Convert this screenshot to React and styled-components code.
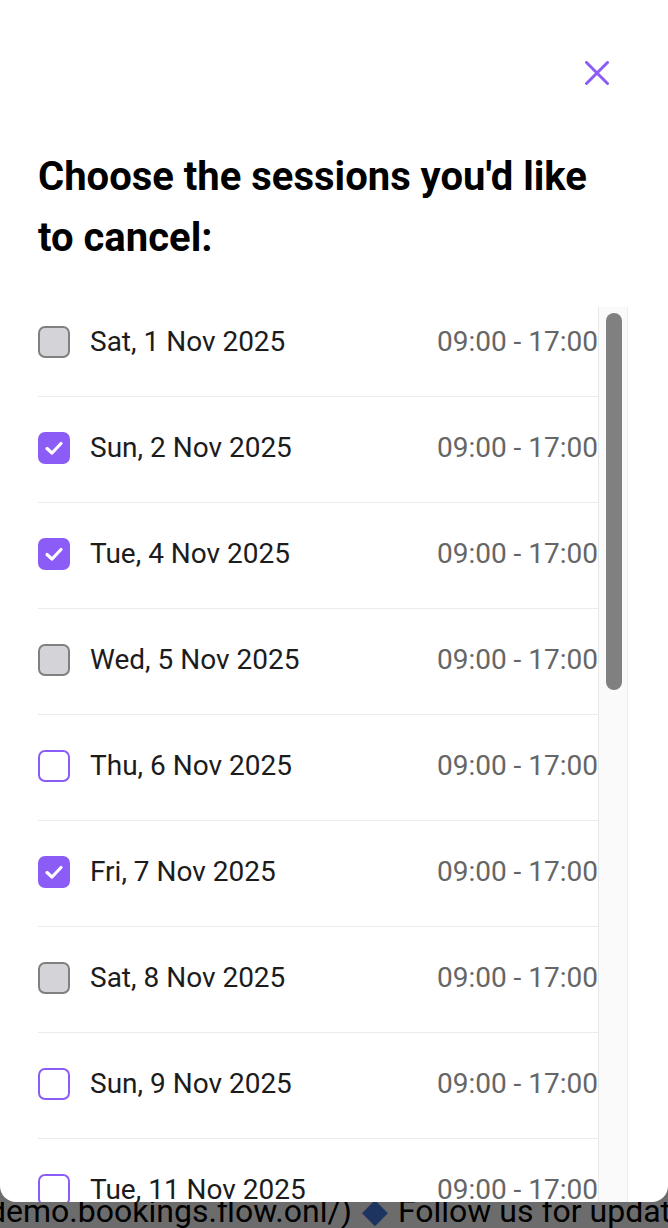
import React, { useState } from "react";
import styled, { createGlobalStyle } from "styled-components";

const GlobalStyle = createGlobalStyle`
  html, body {
    margin: 0;
    padding: 0;
    background: #6c6c6c;
    overflow: hidden;
  }
  * { box-sizing: border-box; }
  body {
    font-family: Roboto, "Noto Sans", "Liberation Sans", sans-serif;
  }
`;

const Page = styled.div`
  width: 668px;
  height: 1228px;
  display: flex;
  flex-direction: column;
`;

const Modal = styled.div`
  position: relative;
  z-index: 1;
  height: 1202px;
  flex: none;
  background: #ffffff;
  border-radius: 0 0 16px 16px;
  overflow: hidden;
  display: flex;
  flex-direction: column;
  padding: 0 40px 0 38px;
`;

const CloseRow = styled.div`
  display: flex;
  justify-content: flex-end;
  padding-top: 61px;
  padding-right: 19px;
`;

const CloseButton = styled.button`
  width: 24px;
  height: 24px;
  padding: 0;
  border: 0;
  background: transparent;
  cursor: pointer;
  display: flex;
  color: #8b5cf6;
`;

const Heading = styled.h2`
  margin: 61px 0 0;
  font-size: 40px;
  line-height: 61px;
  font-weight: 700;
  color: #000;
  letter-spacing: 0;
`;

const ListArea = styled.div`
  margin-top: 39px;
  flex: 1;
  min-height: 0;
  display: flex;
`;

const List = styled.ul`
  list-style: none;
  margin: 0;
  padding: 0;
  flex: 1;
  min-width: 0;
  overflow: hidden;
`;

const Track = styled.div`
  flex: none;
  width: 30px;
  background: #fafafa;
  border-left: 1px solid #e8e8e8;
  border-right: 1px solid #ededed;
  padding: 6px 0 0 7px;
`;

const Thumb = styled.div`
  width: 16px;
  height: 377px;
  border-radius: 8px;
  background: #808080;
`;

const Row = styled.li`
  display: flex;
  align-items: center;
  padding: 35px 0 38px;
  border-bottom: 1px solid #ebebeb;
  cursor: pointer;

  &:first-child {
    padding-top: 19px;
  }
`;

const Box = styled.span`
  flex: none;
  width: 32px;
  height: 32px;
  border-radius: 7px;
  display: flex;
  align-items: center;
  justify-content: center;
  border: 2px solid
    ${(p) => (p.$state === "disabled" ? "#808080" : "#8b5cf6")};
  background: ${(p) =>
    p.$state === "disabled"
      ? "#d4d4d8"
      : p.$state === "checked"
      ? "#8b5cf6"
      : "#ffffff"};
`;

const DateText = styled.span`
  flex: 1;
  margin-left: 20px;
  font-size: 28px;
  line-height: 32px;
  color: #1c1c1c;
  white-space: nowrap;
`;

const TimeText = styled.span`
  flex: none;
  font-size: 28px;
  line-height: 32px;
  color: #666666;
  white-space: nowrap;
`;

const Footer = styled.div`
  height: 26px;
  overflow: hidden;
  white-space: nowrap;
  font-size: 32px;
  line-height: 16px;
  color: #000;
  text-indent: -12px;
`;

const Diamond = styled.span`
  color: #1d3461;
  font-family: "DejaVu Sans", sans-serif;
  font-size: 34px;
  margin: 0 2px;
`;

const sessions = [
  ["Sat, 1 Nov 2025", "disabled"],
  ["Sun, 2 Nov 2025", "checked"],
  ["Tue, 4 Nov 2025", "checked"],
  ["Wed, 5 Nov 2025", "disabled"],
  ["Thu, 6 Nov 2025", "unchecked"],
  ["Fri, 7 Nov 2025", "checked"],
  ["Sat, 8 Nov 2025", "disabled"],
  ["Sun, 9 Nov 2025", "unchecked"],
  ["Tue, 11 Nov 2025", "unchecked"],
  ["Wed, 12 Nov 2025", "unchecked"],
  ["Thu, 13 Nov 2025", "unchecked"],
  ["Fri, 14 Nov 2025", "unchecked"],
  ["Sat, 15 Nov 2025", "unchecked"],
  ["Sun, 16 Nov 2025", "unchecked"],
  ["Tue, 18 Nov 2025", "unchecked"],
  ["Wed, 19 Nov 2025", "unchecked"],
  ["Thu, 20 Nov 2025", "unchecked"],
  ["Fri, 21 Nov 2025", "unchecked"],
  ["Sat, 22 Nov 2025", "unchecked"],
  ["Sun, 23 Nov 2025", "unchecked"],
];

function Check() {
  return (
    <svg width="24" height="24" viewBox="0 0 24 24" fill="none">
      <path
        d="M5 12.5 L10 17 L19 7.5"
        stroke="#ffffff"
        strokeWidth="3.2"
        strokeLinecap="round"
        strokeLinejoin="round"
      />
    </svg>
  );
}

function CloseIcon() {
  return (
    <svg width="24" height="24" viewBox="0 0 24 24" fill="none">
      <path
        d="M1.5 1.5 L22.5 22.5 M22.5 1.5 L1.5 22.5"
        stroke="currentColor"
        strokeWidth="3"
        strokeLinecap="round"
      />
    </svg>
  );
}

export default function App() {
  const [items, setItems] = useState(sessions);
  const toggle = (i) =>
    setItems((prev) =>
      prev.map((it, j) =>
        j === i && it[1] !== "disabled"
          ? [it[0], it[1] === "checked" ? "unchecked" : "checked"]
          : it
      )
    );

  return (
    <>
      <GlobalStyle />
      <Page>
        <Modal>
          <CloseRow>
            <CloseButton aria-label="Close">
              <CloseIcon />
            </CloseButton>
          </CloseRow>
          <Heading>Choose the sessions you'd like to cancel:</Heading>
          <ListArea>
            <List>
              {items.map(([date, state], i) => (
                <Row key={date} onClick={() => toggle(i)}>
                  <Box
                    $state={state}
                    role="checkbox"
                    aria-checked={state === "checked"}
                  >
                    {state === "checked" && <Check />}
                  </Box>
                  <DateText>{date}</DateText>
                  <TimeText>09:00 - 17:00</TimeText>
                </Row>
              ))}
            </List>
            <Track>
              <Thumb />
            </Track>
          </ListArea>
        </Modal>
        <Footer>
          demo.bookings.flow.onl/) <Diamond>◆</Diamond> Follow us for updates and news
        </Footer>
      </Page>
    </>
  );
}
